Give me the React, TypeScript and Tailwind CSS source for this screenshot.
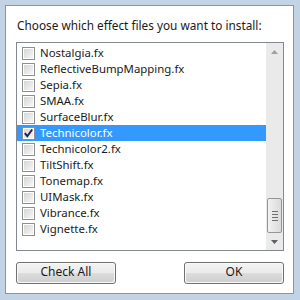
import React from 'react';

const EFFECTS = [
    'Nostalgia.fx',
    'ReflectiveBumpMapping.fx',
    'Sepia.fx',
    'SMAA.fx',
    'SurfaceBlur.fx',
    'Technicolor.fx',
    'Technicolor2.fx',
    'TiltShift.fx',
    'Tonemap.fx',
    'UIMask.fx',
    'Vibrance.fx',
    'Vignette.fx',
];

const font = { fontFamily: '"Noto Sans", "Open Sans", sans-serif' };

const CheckBox: React.FC<{ checked?: boolean }> = ({ checked }) => (
    <div className="w-[13px] h-[13px] border border-[#8f8f8f] bg-white p-[1px] shrink-0">
        <div className="relative w-full h-full bg-gradient-to-br from-[#d6d6d6] to-[#f6f6f6]">
            {checked && (
                <svg className="absolute -left-[1px] -top-[1px]" width="11" height="11" viewBox="0 0 11 11">
                    <path d="M1.8 5.2 L4.3 8.2 L9.2 1.5" fill="none" stroke="#1e1e4a" strokeWidth="1.9" />
                </svg>
            )}
        </div>
    </div>
);

const Button: React.FC<{ label: string }> = ({ label }) => (
    <div className="w-[100px] h-[22px] rounded-[3px] border border-[#707070] p-[1px] bg-[#f9f9f9]">
        <div className="h-full rounded-[2px] flex flex-col overflow-hidden">
            <div className="flex-1 bg-gradient-to-b from-[#f2f2f2] to-[#ebebeb]" />
            <div className="flex-1 bg-gradient-to-b from-[#dddddd] to-[#cfcfcf]" />
        </div>
        <div className="relative -mt-[19px] h-[18px] flex items-center justify-center text-[12px] text-[#1a1a1a]" style={font}>
            {label}
        </div>
    </div>
);

const ScrollBar: React.FC = () => (
    <div className="w-[17px] h-full bg-[#eaeaea] flex flex-col items-center">
        <div className="h-[17px] w-full flex items-center justify-center">
            <svg width="7" height="4" viewBox="0 0 7 4">
                <path d="M0 4 L3.5 0 L7 4 Z" fill="#a0a0a0" />
            </svg>
        </div>
        <div className="flex-1" />
        <div className="w-[15px] h-[35px] rounded-[2px] border border-[#959595] bg-gradient-to-r from-[#f2f2f2] to-[#dadada] flex flex-col items-center justify-center gap-[2px]">
            <div className="w-[6px] h-[1px] bg-[#6e6e6e]" />
            <div className="w-[6px] h-[1px] bg-[#6e6e6e]" />
            <div className="w-[6px] h-[1px] bg-[#6e6e6e]" />
            <div className="w-[6px] h-[1px] bg-[#6e6e6e]" />
        </div>
        <div className="h-[17px] w-full flex items-center justify-center">
            <svg width="7" height="4" viewBox="0 0 7 4">
                <path d="M0 0 L3.5 4 L7 0 Z" fill="#606060" />
            </svg>
        </div>
    </div>
);

export default function App() {
    return (
        <div className="w-[300px] h-[300px] bg-[#c3d3e6] pt-[5px] pl-[5px] pr-[6px] pb-[6px]">
            <div className="h-full border border-[#8a96a6] bg-white pl-[10px] pr-[9px] pt-[11px]">
                <p className="h-[16px] leading-[16px] pl-[1px] text-[11.8px] text-[#1a1a1a] whitespace-nowrap" style={font}>
                    Choose which effect files you want to install:
                </p>
                <div className="mt-[9px] h-[209px] border border-[#828790] flex">
                    <div className="flex-1 pt-[2px]">
                        {EFFECTS.map((name) => {
                            const selected = name === 'Technicolor.fx';
                            return (
                                <div
                                    key={name}
                                    className={`h-[16px] flex items-center pl-[5px] gap-[5px] ${selected ? 'bg-[#3399ff] text-white' : 'text-[#1a1a1a]'}`}
                                >
                                    <CheckBox checked={selected} />
                                    <span className="text-[11.4px] leading-[16px] whitespace-nowrap" style={font}>
                                        {name}
                                    </span>
                                </div>
                            );
                        })}
                    </div>
                    <ScrollBar />
                </div>
                <div className="mt-[11px] flex justify-between">
                    <Button label="Check All" />
                    <Button label="OK" />
                </div>
            </div>
        </div>
    );
}
